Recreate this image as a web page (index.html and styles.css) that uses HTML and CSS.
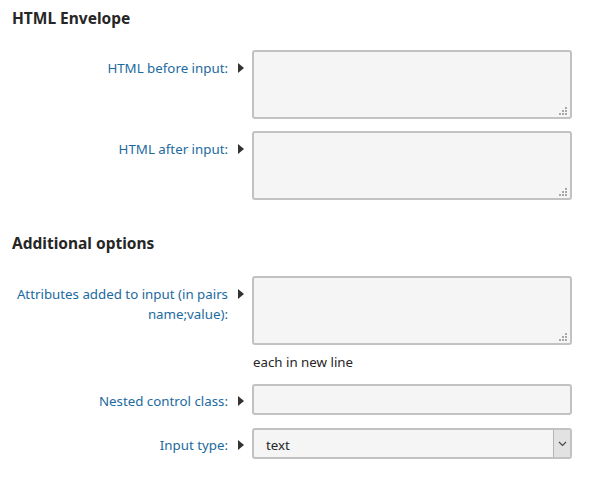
FILE: index.html
```html
<!DOCTYPE html>
<html lang="en">
<head>
    <meta charset="UTF-8">
    <title>Field settings</title>
    <link rel="stylesheet" href="styles.css">
</head>
<body>
    <div class="settings">
        <h2 class="section-title">HTML Envelope</h2>

        <div class="form-row">
            <label class="form-label" for="htmlBefore">HTML before input:</label>
            <span class="marker"></span>
            <div class="area-wrap">
                <textarea id="htmlBefore" class="form-area"></textarea>
                <svg class="grip" width="8" height="8" viewBox="0 0 8 8"><rect x="6" y="0" width="2" height="2"/><rect x="3" y="3" width="2" height="2"/><rect x="6" y="3" width="2" height="2"/><rect x="0" y="6" width="2" height="2"/><rect x="3" y="6" width="2" height="2"/><rect x="6" y="6" width="2" height="2"/></svg>
            </div>
        </div>

        <div class="form-row">
            <label class="form-label" for="htmlAfter">HTML after input:</label>
            <span class="marker"></span>
            <div class="area-wrap">
                <textarea id="htmlAfter" class="form-area"></textarea>
                <svg class="grip" width="8" height="8" viewBox="0 0 8 8"><rect x="6" y="0" width="2" height="2"/><rect x="3" y="3" width="2" height="2"/><rect x="6" y="3" width="2" height="2"/><rect x="0" y="6" width="2" height="2"/><rect x="3" y="6" width="2" height="2"/><rect x="6" y="6" width="2" height="2"/></svg>
            </div>
        </div>

        <h2 class="section-title second">Additional options</h2>

        <div class="form-row">
            <label class="form-label" for="attributes">Attributes added to input (in pairs name;value):</label>
            <span class="marker"></span>
            <div class="field-col">
                <div class="area-wrap">
                    <textarea id="attributes" class="form-area"></textarea>
                    <svg class="grip" width="8" height="8" viewBox="0 0 8 8"><rect x="6" y="0" width="2" height="2"/><rect x="3" y="3" width="2" height="2"/><rect x="6" y="3" width="2" height="2"/><rect x="0" y="6" width="2" height="2"/><rect x="3" y="6" width="2" height="2"/><rect x="6" y="6" width="2" height="2"/></svg>
                </div>
                <div class="help">each in new line</div>
            </div>
        </div>

        <div class="form-row short">
            <label class="form-label" for="nestedClass">Nested control class:</label>
            <span class="marker"></span>
            <input type="text" id="nestedClass" class="form-input">
        </div>

        <div class="form-row short">
            <label class="form-label">Input type:</label>
            <span class="marker"></span>
            <div class="form-select">
                <span class="select-value">text</span>
                <span class="select-btn">
                    <svg width="9" height="6" viewBox="0 0 9 6"><path d="M1 1 L4.5 4.5 L8 1" fill="none" stroke="#444" stroke-width="1.1"/></svg>
                </span>
            </div>
        </div>
    </div>
</body>
</html>
```

FILE: styles.css
```css
body {
    margin: 0;
    font-family: "Noto Sans", "Open Sans", sans-serif;
    font-size: 13.3px;
    color: #262626;
    background-color: #fff;
}

.settings {
    padding: 8px 12px 0 12px;
}

.section-title {
    margin: 0 0 22px 0;
    font-size: 15.5px;
    line-height: 20px;
    font-weight: bold;
    color: #262626;
}

.section-title.second {
    margin-top: 33px;
    margin-bottom: 23px;
}

.form-row {
    display: grid;
    grid-template-columns: 216px 24px 320px;
    margin-bottom: 12px;
}

.form-row.short {
    margin-bottom: 13px;
}

.form-label {
    padding-top: 8px;
    line-height: 20px;
    text-align: right;
    color: #1b6aa0;
}

.short .form-label {
    padding-top: 7px;
}

.marker {
    width: 0;
    height: 0;
    margin: 13px 0 0 10px;
    border-top: 5px solid transparent;
    border-bottom: 5px solid transparent;
    border-left: 6px solid #333;
}

.short .marker {
    margin-top: 12px;
}

.area-wrap {
    position: relative;
    height: 69px;
}

.form-area {
    display: block;
    box-sizing: border-box;
    width: 320px;
    height: 69px;
    margin: 0;
    border: 2px solid #c2c2c2;
    border-radius: 3px;
    background-color: #f5f5f5;
    resize: none;
}

.grip {
    position: absolute;
    right: 5px;
    bottom: 4px;
    fill: #a8a8a8;
}

.help {
    padding: 8px 0 0 1px;
    line-height: 19px;
    color: #262626;
}

.form-input {
    box-sizing: border-box;
    width: 320px;
    height: 31px;
    margin: 0;
    border: 2px solid #c2c2c2;
    border-radius: 3px;
    background-color: #f5f5f5;
}

.form-select {
    box-sizing: border-box;
    display: flex;
    width: 320px;
    height: 31px;
    border: 2px solid #c2c2c2;
    border-radius: 3px;
    background-color: #f5f5f5;
}

.select-value {
    flex: 1;
    padding: 3px 0 0 12px;
    line-height: 24px;
    color: #262626;
}

.select-btn {
    display: flex;
    align-items: center;
    justify-content: center;
    width: 16px;
    border-left: 1px solid #b5b5b5;
    background-color: #e2e2e2;
}
```
